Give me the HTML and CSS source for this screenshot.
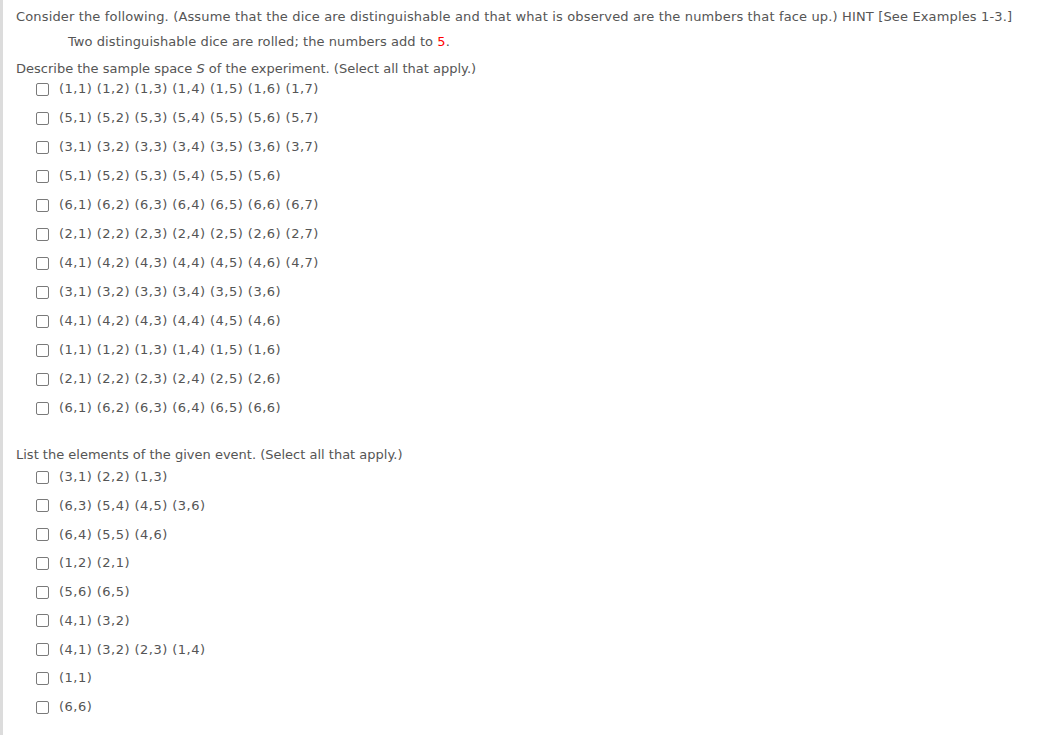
FILE: index.html
```html
<!DOCTYPE html>
<html lang="en">
<head>
  <meta charset="UTF-8">
  <title>Dice sample space</title>
  <link rel="stylesheet" href="styles.css">
</head>
<body>
  <div class="question">
    <p class="intro">Consider the following. (Assume that the dice are distinguishable and that what is observed are the numbers that face up.) HINT [See Examples 1-3.]</p>
    <p class="setup">Two distinguishable dice are rolled; the numbers add to <span class="red">5</span>.</p>

    <p class="prompt">Describe the sample space <i>S</i> of the experiment. (Select all that apply.)</p>
    <ul class="choices">
      <li><span class="box"></span>(1,1) (1,2) (1,3) (1,4) (1,5) (1,6) (1,7)</li>
      <li><span class="box"></span>(5,1) (5,2) (5,3) (5,4) (5,5) (5,6) (5,7)</li>
      <li><span class="box"></span>(3,1) (3,2) (3,3) (3,4) (3,5) (3,6) (3,7)</li>
      <li><span class="box"></span>(5,1) (5,2) (5,3) (5,4) (5,5) (5,6)</li>
      <li><span class="box"></span>(6,1) (6,2) (6,3) (6,4) (6,5) (6,6) (6,7)</li>
      <li><span class="box"></span>(2,1) (2,2) (2,3) (2,4) (2,5) (2,6) (2,7)</li>
      <li><span class="box"></span>(4,1) (4,2) (4,3) (4,4) (4,5) (4,6) (4,7)</li>
      <li><span class="box"></span>(3,1) (3,2) (3,3) (3,4) (3,5) (3,6)</li>
      <li><span class="box"></span>(4,1) (4,2) (4,3) (4,4) (4,5) (4,6)</li>
      <li><span class="box"></span>(1,1) (1,2) (1,3) (1,4) (1,5) (1,6)</li>
      <li><span class="box"></span>(2,1) (2,2) (2,3) (2,4) (2,5) (2,6)</li>
      <li><span class="box"></span>(6,1) (6,2) (6,3) (6,4) (6,5) (6,6)</li>
    </ul>

    <p class="prompt second">List the elements of the given event. (Select all that apply.)</p>
    <ul class="choices tight">
      <li><span class="box"></span>(3,1) (2,2) (1,3)</li>
      <li><span class="box"></span>(6,3) (5,4) (4,5) (3,6)</li>
      <li><span class="box"></span>(6,4) (5,5) (4,6)</li>
      <li><span class="box"></span>(1,2) (2,1)</li>
      <li><span class="box"></span>(5,6) (6,5)</li>
      <li><span class="box"></span>(4,1) (3,2)</li>
      <li><span class="box"></span>(4,1) (3,2) (2,3) (1,4)</li>
      <li><span class="box"></span>(1,1)</li>
      <li><span class="box"></span>(6,6)</li>
    </ul>
  </div>
</body>
</html>
```

FILE: styles.css
```css
*{
  margin: 0;
  padding: 0;
}
body{
  background: #fff;
  font-family: "DejaVu Sans", Verdana, sans-serif;
  font-size: 13px;
  color: #555;
}
.question{
  border-left: 3px solid #dcdcdc;
  padding: 7px 0 40px 13px;
  min-height: 690px;
}
.intro, .setup, .prompt{
  line-height: 20px;
}
.intro{
  letter-spacing: 0.15px;
}
.setup{
  margin: 5px 0 0 52px;
  letter-spacing: 0.07px;
}
.red{
  color: #f00;
}
.prompt{
  margin-top: 7px;
}
.prompt.second{
  margin-top: 27px;
}
.choices{
  list-style-type: none;
  display: flex;
  flex-flow: column nowrap;
  gap: 9px;
  margin-left: 20px;
}
.choices.tight{
  margin-top: 2px;
  gap: 8.75px;
}
.choices li{
  display: flex;
  align-items: center;
  line-height: 20px;
  letter-spacing: 0.47px;
}
.box{
  width: 13px;
  height: 13px;
  box-sizing: border-box;
  border: 1px solid #7a7a7a;
  border-radius: 2px;
  background: #fff;
  margin-right: 10px;
  flex-shrink: 0;
}
```
